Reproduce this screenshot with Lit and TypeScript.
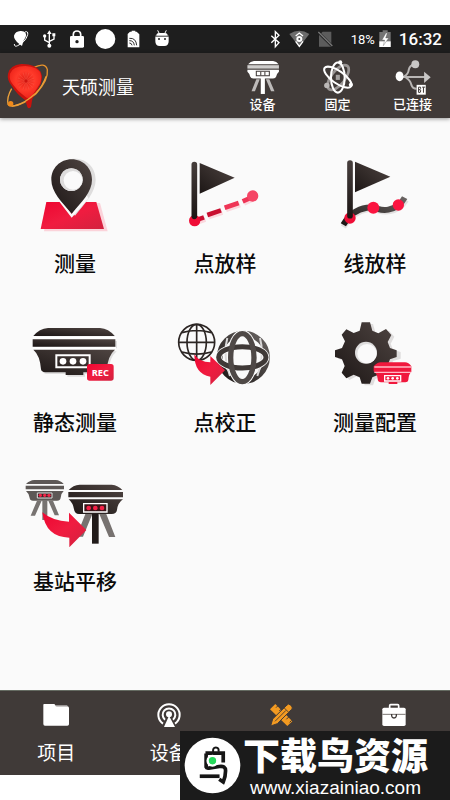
import { LitElement, html, css, svg, TemplateResult } from "lit";
import { customElement, property, state } from "lit/decorators.js";
import { classMap } from "lit/directives/class-map.js";

const receiver = svg`
  <path d="M40 78 Q58 56 84 54 H240 Q266 56 284 78Z"/>
  <path d="M38 88 H286 V110 H38Z"/>
  <path d="M40 119 H285 Q264 136 260 180 Q258 187 248 187 H190 V195 H137 V187 H76 Q64 186 63 178 Q60 136 40 119Z"/>`;

const tiles: { label: string; art: TemplateResult }[] = [
  {
    label: "测量",
    art: html`<svg viewBox="0 0 330 270" aria-hidden="true">
      <path d="M86 174 H240 L263 259 H72Z" fill="#fbd3da"/>
      <path d="M79 171 H229 L252 252 H62Z" fill="url(#red)"/>
      <path d="M165 41 C201 41 227 68 227 104 C227 141 196 174 165 212 C136 174 104 141 104 104 C104 68 130 41 165 41Z" fill="#dedddd"/>
      <path d="M110 160 L155 218 L206 160 L199 150 L155 206 L116 154Z" fill="#fafafa"/>
      <path fill-rule="evenodd" d="M155 43 C190 43 216 70 216 104 C216 141 185 170 155 206 C125 170 94 141 94 104 C94 70 120 43 155 43Z M154 70 a34 34 0 1 0 .1 0Z" fill="url(#dark)"/>
      <path d="M154 70 a34 34 0 1 0 .1 0Z" fill="#dddcdc"/><circle cx="159" cy="106" r="28" fill="#fafafa"/>
    </svg>`,
  },
  {
    label: "点放样",
    art: html`<svg viewBox="0 0 330 270" aria-hidden="true">
      <g stroke="#fbd8de" stroke-width="15" transform="translate(4 6)"><path d="M76 226 L102 217 M112 210 L153 196 M164 188 L206 174 M218 169 L245 157"/></g>
      <g stroke="#c90f30" stroke-width="14"><path d="M76 226 L102 217 M112 210 L153 196"/></g>
      <g stroke="#ef3556" stroke-width="14"><path d="M164 188 L206 174 M218 169 L245 157"/></g>
      <circle cx="74" cy="227" r="17" fill="#ef0d36"/><circle cx="248" cy="153" r="17" fill="#f54565"/>
      <path d="M73 59 V214" stroke="url(#pole)" stroke-width="17" stroke-linecap="round"/>
      <path d="M89 54 L194 98 L89 146Z" fill="url(#dark)"/>
    </svg>`,
  },
  {
    label: "线放样",
    art: html`<svg viewBox="0 0 330 270" aria-hidden="true">
      <path d="M70 246 Q100 198 145 192 C175 190 180 204 210 198 Q240 194 258 165" stroke="#e2e0e0" stroke-width="18" fill="none"/>
      <path d="M70 239 Q96 194 140 188 C172 184 176 200 205 194 Q238 188 254 158" stroke="url(#fade)" stroke-width="18" fill="none"/>
      <circle cx="90" cy="219" r="17" fill="#ef0d36"/><circle cx="160" cy="188" r="18" fill="#fb1440"/><circle cx="235" cy="180" r="17" fill="#fb1440"/>
      <path d="M90 54 V212" stroke="url(#pole)" stroke-width="17" stroke-linecap="round"/>
      <path d="M105 50 L211 95 L105 142Z" fill="url(#dark)"/>
    </svg>`,
  },
  {
    label: "静态测量",
    art: html`<svg viewBox="0 -18 330 270" aria-hidden="true">
      <g fill="#dedddd" transform="translate(5 5)">${receiver}</g>
      <path d="M38 79 H288 V87 H38Z M38 111 H288 V118 H38Z" fill="#fff"/>
      <g fill="url(#dark)">${receiver}</g>
      <path d="M109 136 H209 V172 H109Z" fill="none" stroke="#fff" stroke-width="6"/>
      <g fill="#fff"><circle cx="129" cy="154" r="10"/><circle cx="159" cy="154" r="10"/><circle cx="189" cy="154" r="10"/></g>
      <rect x="201" y="162" width="80" height="50" rx="8" fill="url(#red)"/>
      <text x="241" y="197" class="rec">REC</text>
    </svg>`,
  },
  {
    label: "点校正",
    art: html`<svg viewBox="0 -18 330 270" aria-hidden="true">
      <g fill="none" stroke="#2c2624" stroke-width="5">
        <circle cx="80" cy="97" r="54"/><ellipse cx="80" cy="97" rx="29" ry="54"/>
        <path d="M80 43 V151 M27 97 H134 M36 68 Q80 55 124 68 M36 126 Q80 139 124 126"/>
      </g>
      <circle cx="221" cy="143" r="78" fill="#fafafa"/>
      <circle cx="220" cy="142" r="71" fill="none" stroke="url(#fade)" stroke-width="17"/>
      <path d="M172 84 Q158 136 180 198 M270 84 Q284 136 262 198" stroke="#d9d8d8" stroke-width="6" fill="none"/>
      <ellipse cx="217" cy="143" rx="35" ry="72" fill="none" stroke="#fafafa" stroke-width="22"/>
      <ellipse cx="217" cy="142" rx="71" ry="32" fill="none" stroke="#fafafa" stroke-width="20"/>
      <ellipse cx="217" cy="142" rx="71" ry="32" fill="none" stroke="#3f3937" stroke-width="15"/>
      <ellipse cx="217" cy="143" rx="35" ry="72" fill="none" stroke="#4f4947" stroke-width="16"/>
      <path d="M73 133 Q88 157 121 157 V138 L165 181 L121 225 V200 Q73 192 73 133Z" fill="url(#red)"/>
    </svg>`,
  },
  {
    label: "测量配置",
    art: html`<svg viewBox="0 -18 330 270" aria-hidden="true">
      <path fill="#dfdddd" transform="translate(9 5)" d="M125 37 H150 L157 62 L175 70 L198 57 L214 75 L203 96 L210 114 L233 121 V141 L210 148 L202 168 L214 189 L196 206 L175 194 L157 202 L150 221 H125 L119 202 L101 194 L79 205 L65 188 L74 168 L66 148 L45 141 V121 L66 114 L75 94 L65 74 L79 58 L101 69 L119 62Z"/>
      <path fill="url(#dark)" d="M125 37 H150 L157 62 L175 70 L198 57 L214 75 L203 96 L210 114 L230 121 V141 L210 148 L202 168 L214 189 L196 206 L175 194 L157 202 L150 221 H125 L119 202 L101 194 L79 205 L65 188 L74 168 L66 148 L45 141 V121 L66 114 L75 94 L65 74 L79 58 L101 69 L119 62Z"/>
      <circle cx="138" cy="128" r="33" fill="#dedddd"/><circle cx="141" cy="131" r="29" fill="#fafafa"/>
      <path d="M161 169 Q172 157 182 157 H255 Q266 157 274 169 V186 Q266 192 265 210 Q264 217 256 217 H232 V222 H206 V217 H183 Q174 217 173 208 Q172 192 161 184Z" fill="#f0183d"/>
      <path d="M163 171 H273 M163 187 H273" stroke="#ffb9c5" stroke-width="4"/>
      <path d="M194 197 H242 V213 H194Z" fill="none" stroke="#fff" stroke-width="4"/>
      <g fill="#fff"><circle cx="204" cy="205" r="4"/><circle cx="218" cy="205" r="4"/><circle cx="232" cy="205" r="4"/></g>
    </svg>`,
  },
  {
    label: "基站平移",
    art: html`<svg viewBox="15 -21 330 270" aria-hidden="true">
      <g fill="#5d5856">
        <path d="M33 42 Q44 31 58 30 H122 Q136 31 146 42Z M32 47 H147 V58 H32Z M33 63 H146 Q138 70 137 83 Q136 92 126 92 H54 Q45 92 44 84 Q42 70 33 63Z"/>
        <path d="M66 92 H80 L60 137 H47Z M100 92 H114 L132 136 H119Z M82 90 H97 V150 H82Z" fill="#777371"/>
      </g>
      <path d="M67 69 H111 V84 H67Z" fill="#3e2426" stroke="#ddd" stroke-width="3"/>
      <g fill="#f32348"><circle cx="76" cy="76" r="5"/><circle cx="89" cy="76" r="5"/><circle cx="102" cy="76" r="5"/></g>
      <path d="M212 130 H233 L204 200 H184Z M252 130 H273 L301 201 H282Z" fill="#777270"/>
      <path d="M231 128 H251 V221 H231Z" fill="#211b1a"/>
      <path fill="url(#dark)" d="M161 60 Q174 45 194 44 H290 Q310 46 322 60Z M160 66 H324 V82 H160Z M161 88 H324 Q308 99 306 120 Q304 132 290 132 H192 Q179 132 177 118 Q174 99 161 88Z"/>
      <path d="M206 101 H276 V126 H206Z" fill="#3a1518" stroke="#fff" stroke-width="4"/>
      <g fill="#f32348"><circle cx="221" cy="114" r="7"/><circle cx="241" cy="114" r="7"/><circle cx="261" cy="114" r="7"/></g>
      <path d="M82 127 Q112 153 162 155 V128 L214 180 L163 232 V203 Q92 202 82 127Z" fill="url(#red)"/>
    </svg>`,
  },
];

const statusIcons: TemplateResult[] = [
  html`<svg viewBox="22 15 84 84" aria-hidden="true"><path d="M62 33 C76 32 82 41 78 51 L71 64 L67 78 L58 71 Q42 58 43 47 Q47 34 62 33Z" fill="#fff"/><path d="M76 36 Q86 32 84 44 Q78 66 54 77 Q44 82 44 72" fill="none" stroke="#fff" stroke-width="3"/></svg>`,
  html`<svg viewBox="108 15 84 84" aria-hidden="true"><g fill="none" stroke="#fff" stroke-width="4"><path d="M151 39 V76 M151 68 L137 60 V50 M151 64 L165 57 V46"/></g><path d="M151 31 L158 42 H144Z M160 40 H169 V49 H160Z" fill="#fff"/><circle cx="137" cy="48" r="5" fill="#fff"/><circle cx="151" cy="77" r="6" fill="#fff"/></svg>`,
  html`<svg viewBox="192 15 84 84" aria-hidden="true"><path d="M223 50 V42 Q224 33 234 33 Q244 33 245 42 V50" fill="none" stroke="#fff" stroke-width="5"/><rect x="213" y="48" width="42" height="35" rx="4" fill="#fff"/><circle cx="234" cy="65" r="5" fill="#1e1e1e"/></svg>`,
  html`<svg viewBox="275 15 84 84" aria-hidden="true"><circle cx="318" cy="57" r="30" fill="#fff"/></svg>`,
  html`<svg viewBox="359 15 84 84" aria-hidden="true"><path d="M392 35 H397 V32 H408 V35 H412 L420 43 V82 H385 V42Z" fill="#fff"/><g fill="none" stroke="#333" stroke-width="3"><path d="M390 55 Q410 53 412 76 M390 62 Q403 61 405 76 M390 69 Q397 69 398 76"/></g></svg>`,
  html`<svg viewBox="442 15 84 84" aria-hidden="true"><path d="M467 50 H507 V64 Q507 78 494 78 H480 Q467 78 467 64Z M470 47 Q470 39 478 39 H496 Q504 39 504 47Z" fill="#fff"/><path d="M474 31 L479 41 M500 31 L495 41" stroke="#fff" stroke-width="3"/><path d="M467 48 H507" stroke="#bbb" stroke-width="2"/><circle cx="478" cy="57" r="3" fill="#222"/><circle cx="496" cy="57" r="3" fill="#222"/></svg>`,
];

const actions: { label: string; art: TemplateResult }[] = [
  {
    label: "设备",
    art: html`<svg viewBox="60 117 105 105" aria-hidden="true">
      <path d="M69 132 Q76 124 86 123 H142 Q152 124 158 132Z M67 148 H159 V154 Q152 160 151 168 Q149 174 142 174 H84 Q77 174 75 168 Q74 160 67 154Z" fill="#fff"/>
      <path d="M67 135 H159 V145 H67Z" fill="#cfcdcc"/>
      <path d="M93 153 H131 V166 H93Z" fill="#fff" stroke="#403a38" stroke-width="3"/><path d="M106 154 V165 M118 154 V165" stroke="#403a38" stroke-width="3"/>
      <path d="M93 176 H103 L89 211 H79Z M121 176 H131 L146 211 H136Z" fill="#bdbab9"/><path d="M106 172 H118 V219 H106Z" fill="#fff"/>
    </svg>`,
  },
  {
    label: "固定",
    art: html`<svg viewBox="285 117 105 105" aria-hidden="true"><g fill="none" stroke-width="6">
      <ellipse cx="338" cy="171" rx="20" ry="43" transform="rotate(38 338 171)" stroke="#9a9695" stroke-width="8"/>
      <ellipse cx="337" cy="171" rx="20" ry="44" stroke="#fff"/>
      <ellipse cx="337" cy="170" rx="18" ry="47" transform="rotate(-55 337 170)" stroke="#fff"/></g>
      <circle cx="305" cy="194" r="8" fill="#bbb8b7"/><circle cx="344" cy="127" r="6" fill="#fff"/><circle cx="375" cy="192" r="6" fill="#fff"/><path d="M331 163 H343 V178 H331Z" fill="#a4a1a0"/>
    </svg>`,
  },
  {
    label: "已连接",
    art: html`<svg viewBox="508 117 110 110" aria-hidden="true"><g fill="none" stroke="#b9b6b5" stroke-width="6">
      <path d="M522 172 H600 M536 170 Q548 164 550 150 Q553 136 566 134 M541 174 Q555 182 558 196 Q562 208 574 208"/></g>
      <path d="M597 156 L617 173 L597 190Z" fill="#c9c7c6"/><circle cx="570" cy="133" r="12" fill="#c9c7c6"/>
      <ellipse cx="522" cy="170" rx="12" ry="15" fill="#fff"/><path d="M574 196 H602 V226 H574Z" fill="#fff"/>
      <path d="M580 203 H586 Q588 207 584 210 Q589 214 585 219 H580Z M580 211 H585 M591 203 H600 M595 203 V220" fill="none" stroke="#403a38" stroke-width="3"/>
    </svg>`,
  },
];

const tabs: { name: string; label: string; art: TemplateResult }[] = [
  {
    name: "项目",
    label: "项目",
    art: html`<svg viewBox="123 45 90 90" aria-hidden="true"><path d="M132 57 H163 L169 64 H202 Q207 64 207 69 V118 Q207 122 202 122 H135 Q130 122 130 117 V60 Q130 57 132 57Z" fill="#fff"/><path d="M166 62 H202" stroke="#aaa7a6" stroke-width="3"/></svg>`,
  },
  {
    name: "设备",
    label: "设备",
    art: html`<svg viewBox="461 45 90 90" aria-hidden="true"><g fill="none" stroke="#fff"><path d="M488 116 A32 32 0 1 1 524 116" stroke-width="6"/><path d="M494 104 A19 19 0 1 1 518 104" stroke-width="6"/></g><circle cx="506" cy="88" r="9" fill="#fff"/><path d="M506 92 L524 126 H491Z" fill="#fff"/></svg>`,
  },
  {
    name: "测量",
    label: "",
    art: html`<svg viewBox="123 45 90 90" aria-hidden="true">
      <path d="M151 57 L202 109 L187 123 L135 73Z" fill="#f39a21"/><path d="M160 61 L153 68 M170 71 L163 78 M184 103 L191 96 M194 112 L200 106" stroke="#403a38" stroke-width="3"/>
      <path d="M186 60 Q191 54 196 60 L201 65 Q204 69 199 74 L157 116 L137 123 L143 102Z" fill="#f39a21" stroke="#403a38" stroke-width="3"/>
      <path d="M178 69 L193 84 M183 76 L150 109" stroke="#5a4630" stroke-width="3"/>
    </svg>`,
  },
  {
    name: "工具",
    label: "",
    art: html`<svg viewBox="461 45 90 90" aria-hidden="true"><path d="M493 69 V62 Q493 59 496 59 H517 Q520 59 520 62 V69" fill="none" stroke="#fff" stroke-width="5"/><rect x="471" y="68" width="70" height="55" rx="5" fill="#fff"/><path d="M471 88 H541" stroke="#7b7674" stroke-width="3"/><path d="M499 87 V93 Q500 99 506 99 Q512 99 513 93 V87" fill="none" stroke="#403a38" stroke-width="4"/></svg>`,
  },
];

@customElement("feature-tile")
class FeatureTile extends LitElement {
  @property() label = "";
  @property({ attribute: false }) art?: TemplateResult;

  static styles = css`
    :host { display: block; }
    .tile {
      display: flex; flex-direction: column; align-items: center; gap: 12px;
      width: 100%; margin: 0; padding: 0; border: 0; background: none;
      color: #0a0a0a; font: 500 21px/30px "Noto Sans CJK SC", sans-serif; cursor: pointer;
    }
    svg { display: block; width: 110px; height: 90px; }
    .defs { width: 0; height: 0; position: absolute; }
    .rec { font: bold 28px "Open Sans", sans-serif; fill: #fff; text-anchor: middle; }
  `;

  render() {
    return html`<button class="tile" type="button">
      <svg class="defs" aria-hidden="true"><defs>
        <linearGradient id="dark" x1="0" y1="1" x2="1" y2="0"><stop offset="0" stop-color="#1c1615"/><stop offset="1" stop-color="#4f4542"/></linearGradient>
        <linearGradient id="pole" gradientUnits="userSpaceOnUse" x1="0" y1="215" x2="0" y2="55"><stop offset="0" stop-color="#1c1615"/><stop offset="1" stop-color="#453d3b"/></linearGradient>
        <linearGradient id="fade" x1="0" y1="1" x2="1" y2="0"><stop offset="0" stop-color="#1a1514"/><stop offset="1" stop-color="#696462"/></linearGradient>
        <linearGradient id="red" x1="0" y1="0" x2="1" y2="1"><stop offset="0" stop-color="#ee0631"/><stop offset=".5" stop-color="#f01c40"/><stop offset="1" stop-color="#d2223f"/></linearGradient>
      </defs></svg>
      ${this.art}
      <span>${this.label}</span>
    </button>`;
  }
}

@customElement("app-root")
class AppRoot extends LitElement {
  @state() private active = 2;

  static styles = css`
    :host {
      display: flex; flex-direction: column; box-sizing: border-box; position: relative;
      min-height: 100vh; padding: 25px 0; background: #fff; color: #fff;
      font-family: "Noto Sans CJK SC", sans-serif;
    }
    svg { display: block; flex: none; }
    button { margin: 0; padding: 0; border: 0; background: none; color: inherit; font-family: inherit; cursor: pointer; }
    .status {
      display: flex; align-items: center; justify-content: space-between; height: 28px;
      padding: 0 8px 0 7px; background: #1e1e1e; font-family: Roboto, sans-serif;
    }
    .group { display: flex; align-items: center; }
    .group svg { width: 28px; height: 28px; }
    .group .narrow { width: 24px; }
    .group .battery { width: 12px; margin: 0 8px 0 4px; }
    .percent { font-size: 13px; margin-left: 12px; }
    .time { font-size: 17px; font-weight: 500; }
    .bar {
      display: flex; align-items: center; height: 65px; background: #403a38;
      box-shadow: 0 1px 4px rgba(0, 0, 0, 0.4); position: relative;
    }
    .logo { width: 50px; height: 50px; }
    .title { flex: 1; margin: 0 0 0 12px; font-size: 18px; line-height: 26px; font-weight: 400; }
    .actions { display: grid; grid-template-columns: repeat(3, 75px); }
    .action { display: flex; flex-direction: column; align-items: center; font-size: 13px; line-height: 18px; font-weight: 500; }
    .action svg { width: 36px; height: 36px; }
    .content {
      flex: 1; display: grid; grid-template-columns: repeat(3, 1fr); align-content: start;
      row-gap: 27px; padding: 27px 0; background: #fafafa;
    }
    .tabs { display: grid; grid-template-columns: repeat(4, 1fr); height: 84px; background: #403a38; border-top: 1px solid #656b62; }
    .tab { display: flex; flex-direction: column; align-items: center; padding-top: 9px; gap: 8px; font-size: 19px; line-height: 28px; }
    .tab svg { width: 30px; height: 30px; }
    .on { color: #f39a21; }
    .mark {
      position: absolute; right: 0; bottom: 0; display: flex; align-items: center; gap: 2px;
      width: 270px; height: 69px; box-sizing: border-box; padding-left: 4px; background: #1b1b1b; color: #fff; text-decoration: none;
    }
    .mark svg { width: 57px; height: 57px; }
    .words { display: flex; flex-direction: column; align-items: center; }
    .brand { font-size: 37px; line-height: 44px; font-weight: 900; white-space: nowrap; }
    .site { font: 19px/24px "Liberation Sans", sans-serif; }
  `;

  render() {
    return html`
      <div class="status">
        <div class="group">${statusIcons}</div>
        <div class="group">
          <svg class="narrow" viewBox="115 15 72 84" aria-hidden="true"><path d="M140 47 L163 68 L152 80 V35 L163 46 L140 68" fill="none" stroke="#fff" stroke-width="4"/></svg>
          <svg class="narrow" viewBox="187 15 72 84" aria-hidden="true"><path d="M194 42 Q224 22 254 42 L224 81Z" fill="#6c6c6c"/><path d="M213 48 L224 39 L235 48 M213 64 L224 79 L235 64" fill="none" stroke="#fff" stroke-width="4"/><circle cx="224" cy="57" r="9" fill="#fff"/><circle cx="224" cy="57" r="3" fill="#444"/></svg>
          <svg viewBox="257 15 84 84" aria-hidden="true"><path d="M292 35 H318 V80 H281 V46Z" fill="#5c5c5c"/><path d="M278 36 L321 79" stroke="#1e1e1e" stroke-width="8"/><path d="M279 36 L321 78" stroke="#777" stroke-width="4"/></svg>
          <span class="percent">18%</span>
          <svg class="battery" viewBox="460 15 36 84" aria-hidden="true"><path d="M471 31 H486 V36 H495 V81 H461 V36 H471Z" fill="#747474"/><path d="M461 64 H495 V81 H461Z" fill="#fff"/><path d="M481 39 L469 60 H477 L473 77 L489 54 H480 L485 39Z" fill="#fff" stroke="#555" stroke-width="1"/></svg>
          <span class="time">16:32</span>
        </div>
      </div>
      <header class="bar">
        <svg class="logo" viewBox="0 122 150 150" aria-hidden="true">
          <defs><radialGradient id="ball" cx=".5" cy=".45" r=".6"><stop offset="0" stop-color="#e01a12"/><stop offset=".5" stop-color="#ff3a2a"/><stop offset="1" stop-color="#ec2118"/></radialGradient></defs>
          <path d="M100 142 Q136 124 142 148 Q146 180 108 220 Q72 254 36 258" fill="none" stroke="#e7932c" stroke-width="4"/>
          <path d="M24 160 Q30 134 64 131 Q106 130 122 154 Q132 176 116 202 L97 236 L93 260 Q86 268 82 260 L76 240 Q50 222 36 198 Q20 178 24 160Z" fill="#c9120d"/>
          <path d="M30 160 Q38 137 76 137 Q114 139 122 160 Q128 182 112 202 L94 230 Q84 238 74 228 Q52 212 40 194 Q26 178 30 160Z" fill="url(#ball)"/>
          <g stroke="#ff9a80" stroke-width="1" opacity=".6"><path d="M52 182 H104 M78 156 V208 M58 163 L98 201 M98 163 L58 201 M54 173 L102 192 M54 192 L102 173 M69 157 L87 207 M87 157 L69 207"/></g>
          <circle cx="78" cy="182" r="5" fill="#cf140f"/>
          <path d="M35 205 Q20 230 24 252 Q28 260 44 256 Q74 250 108 218 Q130 194 138 168" fill="none" stroke="#eba03b" stroke-width="4"/><circle cx="32" cy="250" r="8" fill="#f08a1b"/>
        </svg>
        <h1 class="title">天硕测量</h1>
        <div class="actions">
          ${actions.map((a) => html`<button class="action" type="button">${a.art}<span>${a.label}</span></button>`)}
        </div>
      </header>
      <main class="content">
        ${tiles.map((t) => html`<feature-tile .label=${t.label} .art=${t.art}></feature-tile>`)}
      </main>
      <nav class="tabs">
        ${tabs.map((t, i) => html`<button type="button" aria-label=${t.name}
          class=${classMap({ tab: true, on: i === this.active })}
          @click=${() => (this.active = i)}>${t.art}<span>${t.label}</span></button>`)}
      </nav>
      <a class="mark" href="http://www.xiazainiao.com">
        <svg viewBox="27 36 170 170" aria-hidden="true"><circle cx="112" cy="121" r="83" fill="#fff"/>
          <path d="M114 82 Q112 67 122 67 Q132 67 130 80" fill="none" stroke="#161616" stroke-width="6"/>
          <path d="M91 84 H144 V112 M93 85 V126 Q94 130 101 129 L132 124 Q151 121 151 137 Q151 154 144 170 L132 162" fill="none" stroke="#161616" stroke-width="11"/>
          <path d="M74 153 H133" stroke="#161616" stroke-width="11"/><circle cx="112" cy="107" r="18" fill="#fff"/><circle cx="112" cy="107" r="11" fill="#26d95b"/></svg>
        <span class="words"><span class="brand">下载鸟资源</span><span class="site">www.xiazainiao.com</span></span>
      </a>
    `;
  }
}
